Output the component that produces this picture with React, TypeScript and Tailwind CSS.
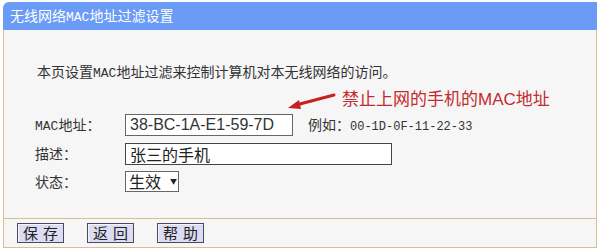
import React from 'react';

const cjk = "font-['Noto_Sans_CJK_SC',sans-serif]";
const mono = "font-['Liberation_Mono','Noto_Sans_CJK_SC',monospace]";

const Mac = () => <span className={`${mono} text-[13px]`}>MAC</span>;

const FormRow: React.FC<{ label: React.ReactNode; children: React.ReactNode }> = ({ label, children }) => (
  <div className="flex items-center">
    <div className="w-[90px] text-[14px] text-[#333]">
      <span>{label}</span>
    </div>
    {children}
  </div>
);

const PageButton: React.FC<{ chars: [string, string] }> = ({ chars }) => (
  <button className="w-[47px] h-[20px] bg-[#dcdcf2] border border-[#4a4a5a] shadow-[inset_1px_1px_0_#f4f4ff] flex items-center justify-center gap-[5px] text-[15px] leading-[18px] text-[#222]">
    <span>{chars[0]}</span>
    <span>{chars[1]}</span>
  </button>
);

const App: React.FC = () => {
  return (
    <div className={`relative w-[600px] h-[250px] bg-white pt-[2px] ${cjk}`}>
      <div className="ml-[3px] w-[594px]">
        <div className="h-[28px] bg-[#6a9bf6] rounded-tl-[6px] pl-[7px] flex items-center text-white text-[14px]">
          <span>
            无线网络<Mac />地址过滤设置
          </span>
        </div>

        <div className="border-x border-b border-[#d8bf95] bg-[#f6f6f6]">
          <div className="pt-[31px] pl-[33px] h-[188px]">
            <p className="text-[14px] leading-[20px] text-[#333]">
              本页设置<Mac />地址过滤来控制计算机对本无线网络的访问。
            </p>

            <div className="mt-[30px] flex flex-col gap-[6px] -ml-[2px]">
              <FormRow label={<><Mac />地址：</>}>
                <div className="w-[168px] h-[22px] bg-white border border-[#666] pl-[4px] flex items-center font-['Liberation_Sans',sans-serif] text-[16px] text-[#333]">
                  38-BC-1A-E1-59-7D
                </div>
                <div className="ml-[15px] text-[14px] text-[#333]">
                  <span>
                    例如：<span className={`${mono} text-[12px]`}>00-1D-0F-11-22-33</span>
                  </span>
                </div>
              </FormRow>
              <FormRow label="描述：">
                <div className="w-[267px] h-[22px] bg-white border border-[#444] pl-[4px] flex items-center text-[16px] text-[#222]">
                  张三的手机
                </div>
              </FormRow>
              <FormRow label="状态：">
                <div className="w-[54px] h-[21px] bg-white border border-[#666] pl-[3px] flex items-center text-[16px] text-[#222]">
                  <span>生效</span>
                  <span className="ml-[9px] text-[7px] leading-none">▼</span>
                </div>
              </FormRow>
            </div>
          </div>

          <div className="border-t border-[#d8bf95] h-[29px] pt-[4px] pl-[13px] flex items-start gap-[23px]">
            <PageButton chars={['保', '存']} />
            <PageButton chars={['返', '回']} />
            <PageButton chars={['帮', '助']} />
          </div>
        </div>
      </div>

      <svg className="absolute left-[280px] top-[88px]" width="60" height="26" viewBox="0 0 60 26">
        <path d="M54 7 L16 17" stroke="#c8201e" strokeWidth="3" strokeLinecap="round" />
        <path d="M8 20 L19 12 L21 21 Z" fill="#c8201e" />
      </svg>

      <div className="absolute left-[342px] top-[86px] text-[17px] leading-[24px] text-[#c42a2e]">
        禁止上网的手机的<span className="font-['Liberation_Sans',sans-serif]">MAC</span>地址
      </div>
    </div>
  );
};

export default App;
